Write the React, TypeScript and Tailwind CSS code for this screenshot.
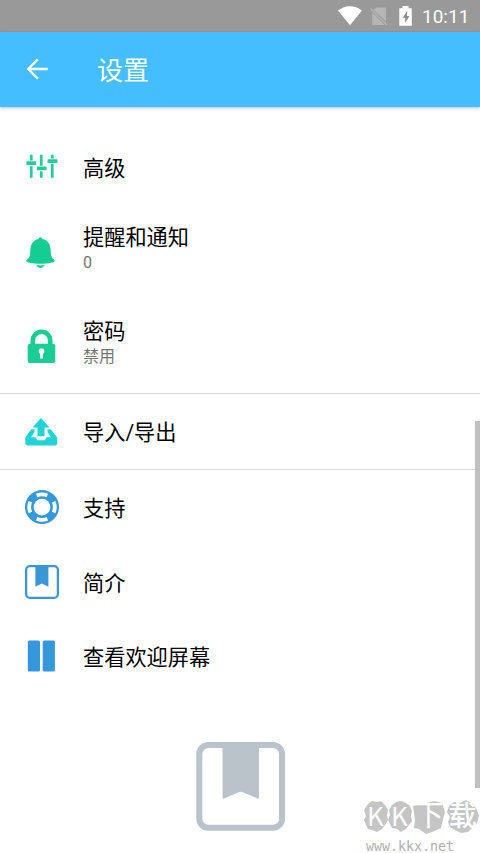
import type { ReactNode } from "react";

// Icons share a 44px box, centred on the row.
function Icon({ color, children }: { color: string; children: ReactNode }) {
  return (
    <svg width="44" height="44" viewBox="0 0 44 44" className={`shrink-0 ${color}`} fill="currentColor">
      {children}
    </svg>
  );
}

function SlidersIcon() {
  return (
    <Icon color="text-[#1fce9b]">
      <path d="M10.9 8.7h2.7v5.8h-2.7zM10.9 20.2h2.7v11.6h-2.7zM20.9 8.7h2.7v11h-2.7zM20.9 25.2h2.7v6.6h-2.7zM31.9 8.7h2.7v3.8h-2.7zM31.9 18h2.7v13.8h-2.7z" />
      <rect x="7.4" y="15.3" width="9.7" height="3.6" rx="0.5" />
      <rect x="17.9" y="20.6" width="9.7" height="3.6" rx="0.5" />
      <rect x="28.6" y="13.3" width="9.9" height="3.6" rx="0.5" />
    </Icon>
  );
}

function BellIcon() {
  return (
    <Icon color="text-[#14cd93]">
      <path d="M21.5 6.2c1 0 1.6.8 1.9 1.7 5.2 1.2 7.9 5 8.2 10.2.2 5.2.5 8.4 2.8 10 1.2.7 1.5 1.4 1.2 2.2-.3.6-1 .9-2 1.1-7.5 1.9-16.7 1.9-24.2 0-1-.2-1.7-.5-2-1.1-.3-.8 0-1.5 1.2-2.2 2.3-1.6 2.6-4.8 2.8-10 .3-5.200 3-9 8.200-10.200.3-.9.9-1.700 1.900-1.700z" />
      <path d="M17.5 34.100q4 .6 8 0c-.5 1.900-2 2.800-4 2.800s-3.500-.9-4-2.800z" />
    </Icon>
  );
}

function LockIcon() {
  return (
    <Icon color="text-[#1acd94]">
      <path d="M13.8 20v-4.5a8.7 8.7 0 0 1 17.4 0V20" fill="none" stroke="currentColor" strokeWidth="4.6" />
      <rect x="8.7" y="18.8" width="27.6" height="19.2" rx="2.8" />
      <path d="M22.5 23.3a3 3 0 0 1 1.4 5.6v4.7h-2.8v-4.7a3 3 0 0 1 1.4-5.6z" fill="#fff" />
    </Icon>
  );
}

function ExportIcon() {
  return (
    <Icon color="text-[#21d3d6]">
      <path d="M22 8l7.7 8.500c.5.600.3 1-.4 1h-3.800v8.700h-7v-8.700h-3.800c-.7 0-.9-.4-.4-1z" />
      <path d="M12.300 19.300h3.200v2.800l-3.300 5.200h4.300l1.800 3h7.400l1.800-3h4.300l-3.300-5.200v-2.800h3.200l6.500 8.300v5.900c-.1 1.300-.9 2-2.200 2H8.500c-1.300 0-2.100-.7-2.200-2v-5.900z" />
    </Icon>
  );
}

function LifebuoyIcon() {
  return (
    <Icon color="text-[#3498db]">
      <circle cx="23" cy="21.1" r="17" />
      <circle cx="23" cy="21.1" r="8.3" fill="#fff" />
      <circle
        cx="23"
        cy="21.1"
        r="12.8"
        fill="none"
        stroke="#fff"
        strokeWidth="3.8"
        pathLength="80"
        strokeDasharray="11 9"
        strokeDashoffset="5.5"
      />
    </Icon>
  );
}

function BookmarkIcon() {
  return (
    <Icon color="text-[#3a97d6]">
      <rect x="7.1" y="5.2" width="31.8" height="31.6" rx="3.8" fill="none" stroke="currentColor" strokeWidth="2.3" />
      <path d="M16.4 5.5h13v20.3l-6.5-3.2-6.5 3.2z" />
    </Icon>
  );
}

function PagesIcon() {
  return (
    <Icon color="text-[#3498db]">
      <rect x="8.8" y="5.6" width="12.2" height="30.9" rx="1.5" />
      <rect x="23.7" y="5.6" width="12.2" height="30.9" rx="1.5" />
    </Icon>
  );
}

type RowProps = { icon: ReactNode; title: string; note?: string; height?: string };

function Row({ icon, title, note, height = "h-[75px]" }: RowProps) {
  return (
    <div className={`flex items-center gap-5 pl-[19px] ${height}`}>
      {icon}
      <div className={note ? "-mt-1.5" : "pt-0.5"}>
        <div className="text-[21.2px] leading-7 text-black">{title}</div>
        {note && <div className="-mt-px text-[16px] leading-6 text-[#757575]">{note}</div>}
      </div>
    </div>
  );
}

function StatusBar() {
  return (
    <div className="flex h-8 items-center justify-end bg-[#999] text-white">
      <svg width="96" height="32" viewBox="334 0 96 32" className="w-24" fill="currentColor">
        <path d="M338 10.5c7-5.7 17-5.7 24 0L350 25.2z" />
        <path d="M376.800 7.500h9.200v13.700L373.500 9.800zM372.200 12.300l12.500 12.700h-12.500z" fill="#b5b5b5" />
        <path d="M370.500 8.500l16.500 16.500" stroke="#b5b5b5" strokeWidth="1.500" />
        <path d="M402.500 6h6v2.200h3.300v17.500h-12.500V8.200h3.200z" />
        <path d="M407.300 10.800l-4.600 6.900h2.500v5.300l4.200-7h-2.400z" fill="#8c8c8c" />
      </svg>
      <span className="w-[50px] -translate-x-2 pt-0.5 text-[19px]">10:11</span>
    </div>
  );
}

// Site mark: white lettering cut out of rough grey blots.
function Watermark() {
  return (
    <div className="absolute left-[362px] top-[799px] h-[54px] w-[118px]">
      <svg width="118" height="36" viewBox="0 0 118 36" className="absolute" fill="#c5c5c5">
        <path d="M6 5l4-3 5 1 4-1 4 4 3 5-1 5 1 5-3 5-3 4-5 3-5-2-4-1-2-4-2-5 2-4-2-6z" />
        <path d="M30 6l4-3 5-1 5 2 4 3 2 5-1 5 1 5-3 4-3 4-5 3-4-3-5-1-2-4-2-4 2-5-1-5z" />
        <path d="M51 7l10-2 11-3 8 2 3 9-2 7-2 9-9 4-6 2-7-5-5-1 1-8z" />
        <path d="M87 7l5-4 6 1 6-3 7 4 4 6 2 6-2 7-5 5-4 4-7 1-6-3-5-3-2-5 2-5-3-5z" />
      </svg>
      <div className="absolute -top-[3px] flex h-[36px] items-center font-['Noto_Sans_CJK_SC',sans-serif] text-white">
        <span className="w-[26px] pl-[5px] text-[26px]">K</span>
        <span className="w-[24px] pl-[3px] text-[26px]">K</span>
        <span className="w-[34px] text-center text-[29px]">下</span>
        <span className="w-[33px] text-center text-[28px] font-medium">载</span>
      </div>
      <div className="absolute left-[4px] top-[40px] font-['DejaVu_Sans_Mono',monospace] text-[13.3px] leading-[16px] text-[#b0b0b0]">
        www.kkx.net
      </div>
    </div>
  );
}

export default function App() {
  return (
    <div className="relative h-[853px] w-[480px] overflow-hidden bg-white font-[Roboto,'Noto_Sans_CJK_SC',sans-serif]">
      <StatusBar />
      <header className="flex h-[75px] items-center bg-[#44beff] text-white shadow-[0_1px_3px_rgba(0,0,0,0.25)]">
        <svg width="24" height="24" viewBox="0 0 24 24" className="-mt-px ml-[25px]" fill="none" stroke="currentColor" strokeWidth="2.4">
          <path d="M22.8 12H3.5M12.8 2.3L3.3 12l9.5 9.7" />
        </svg>
        <h1 className="ml-12 pt-0.5 text-[26px] leading-8">设置</h1>
      </header>

      <main className="pt-[23px]">
        <Row icon={<SlidersIcon />} title="高级" />
        <Row icon={<BellIcon />} title="提醒和通知" note="0" height="h-[95px]" />
        <Row icon={<LockIcon />} title="密码" note="禁用" height="h-[93px]" />
        <div className="border-y border-[#d6d6d6]">
          <Row icon={<ExportIcon />} title="导入/导出" />
        </div>
        <Row icon={<LifebuoyIcon />} title="支持" />
        <Row icon={<BookmarkIcon />} title="简介" />
        <Row icon={<PagesIcon />} title="查看欢迎屏幕" height="h-[74px]" />

        <div className="mt-[47px] flex justify-center">
          <svg width="90" height="90" viewBox="0 0 90 90" className="text-[#bac3ca]" fill="currentColor">
            <rect x="4.3" y="4" width="82.7" height="82.7" rx="9" fill="none" stroke="currentColor" strokeWidth="6" />
            <path d="M27.5 4H64v52.5q0 1.5-1.5 1l-15.3-6.5q-1.4-.5-2.8 0l-15.4 6.5q-1.5.5-1.5-1z" />
          </svg>
        </div>
      </main>

      <div className="absolute right-0 top-[421px] h-[367px] w-[5px] bg-[#c0c0c0]" />
      <Watermark />
    </div>
  );
}
